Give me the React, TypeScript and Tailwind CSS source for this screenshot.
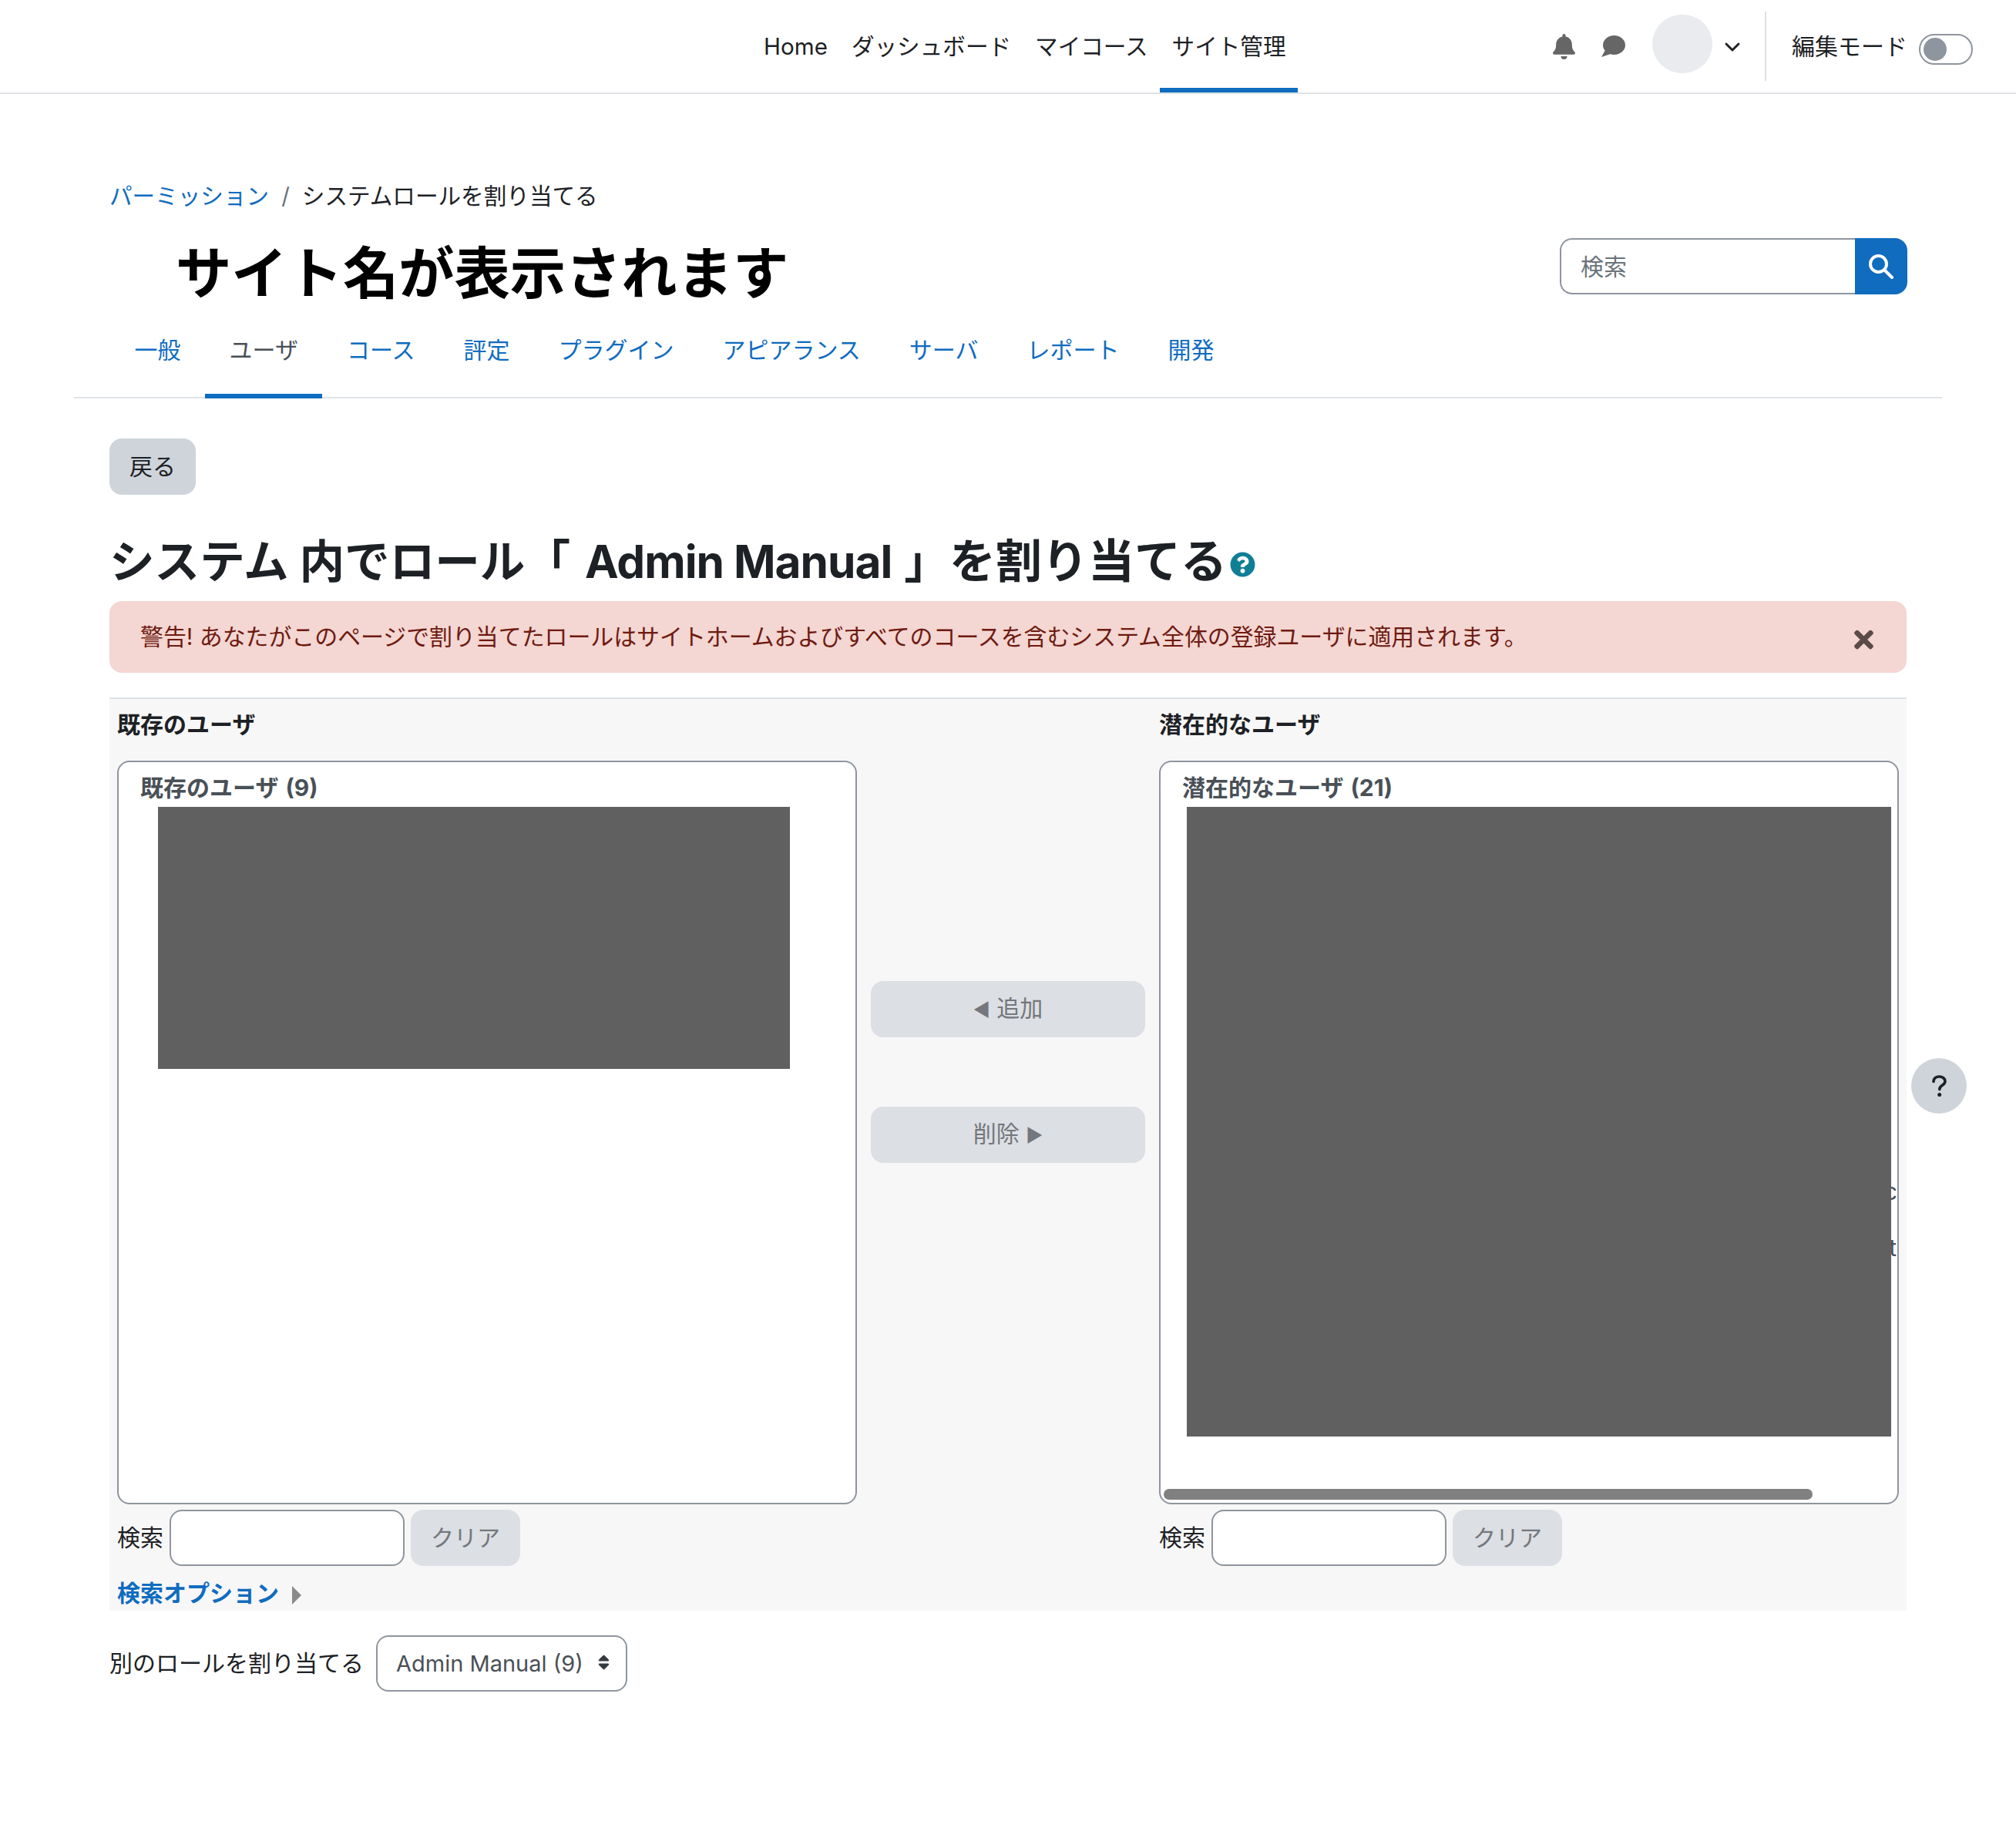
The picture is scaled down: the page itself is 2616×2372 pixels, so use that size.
import { ChevronDown } from "lucide-react";
import { FaBell, FaQuestionCircle, FaSort, FaTimes } from "react-icons/fa";

const navItems = ["Home", "ダッシュボード", "マイコース", "サイト管理"];
const tabs = ["一般", "ユーザ", "コース", "評定", "プラグイン", "アピアランス", "サーバ", "レポート", "開発"];

const SearchRow = () => (
    <div className="flex items-center mt-[7px]">
        <span className="mr-[8px]">検索</span>
        <input className="w-[305px] h-[73px] bg-white border-2 border-[#8f959e] rounded-2xl" />
        <button className="w-[142px] h-[73px] ml-[8px] rounded-2xl bg-[#dcdfe3] text-[#74777b]">クリア</button>
    </div>
);

const App: React.FC = () => {
    return (
        <div className="relative min-h-[2372px] bg-white text-[30px] leading-[45px] text-[#1d2125] font-['Inter','Noto_Sans_CJK_JP',sans-serif]">
            <header className="h-[122px] flex border-b-2 border-[#dee2e6] pl-[975.5px]">
                <nav className="flex text-[29.6px]">
                    {navItems.map((item) => (
                        <a key={item} className={`h-[120px] px-[15.5px] pt-[6px] flex items-center border-b-[6px] ${item === "サイト管理" ? "border-[#0f6cbf]" : "border-transparent"}`}>
                            {item}
                        </a>
                    ))}
                </nav>
                <div className="ml-auto flex items-center pr-[56px]">
                    <FaBell className="w-[29px] h-[33px] text-[#666666]" />
                    <svg viewBox="0 0 32 28" className="w-[32px] h-[28px] ml-[33px] text-[#666666]">
                        <ellipse cx="17.5" cy="12.5" rx="14.5" ry="12.5" fill="currentColor" />
                        <path d="M6 19 L1 28 L13 24 Z" fill="currentColor" />
                    </svg>
                    <div className="w-[78px] h-[76px] ml-[35px] mb-[6px] rounded-full bg-[#e9ebee]" />
                    <ChevronDown className="w-[32px] h-[32px] ml-[10px] mt-[1px]" strokeWidth={2.2} />
                    <div className="w-[2px] h-[90px] ml-[26px] bg-[#dee2e6]" />
                    <span className="ml-[33px]">編集モード</span>
                    <div className="w-[70px] h-[40px] ml-[15px] mt-[8px] rounded-full border-2 border-[#8f959e] flex items-center pl-[4px]">
                        <div className="w-[30px] h-[30px] rounded-full bg-[#8f959e]" />
                    </div>
                </div>
            </header>

            <div className="px-[96px]">
                <div className="mt-[110px] pl-[46px] flex items-center text-[29.6px]">
                    <a className="text-[#0f6cbf]">パーミッション</a>
                    <span className="mx-[16px] text-[#6a737b]">/</span>
                    <span>システムロールを割り当てる</span>
                </div>

                <div className="mt-[32px] h-[73px] flex items-start justify-between pr-[45px]">
                    <h1 className="pl-[132px] pt-[9px] text-[72.3px] leading-[73px] font-bold text-black">サイト名が表示されます</h1>
                    <div className="flex">
                        <input
                            placeholder="検索"
                            className="w-[383px] h-[73px] pl-[25px] border-2 border-r-0 border-[#8f959e] rounded-l-2xl placeholder:text-[#6a737b]"
                        />
                        <button className="w-[68px] h-[73px] bg-[#0f6cbf] rounded-r-2xl flex items-center justify-center">
                            <svg viewBox="0 0 32 32" className="w-[32px] h-[32px]" fill="none" stroke="white" strokeWidth="4" strokeLinecap="round">
                                <circle cx="12.5" cy="12.5" r="10.5" />
                                <line x1="20.5" y1="20.5" x2="30" y2="30" />
                            </svg>
                        </button>
                    </div>
                </div>

                <div className="mt-[24px] flex border-b-2 border-[#dee2e6] pl-[47px]">
                    {tabs.map((tab) => (
                        <a key={tab} className={`pt-[26px] pb-[34px] px-[31.5px] -mb-[2px] border-b-[6px] ${tab === "ユーザ" ? "border-[#0f6cbf] text-[#495057]" : "border-transparent text-[#0f6cbf]"}`}>
                            {tab}
                        </a>
                    ))}
                </div>

                <div className="px-[46px]">
                    <button className="block mt-[52px] w-[112px] h-[73px] rounded-2xl bg-[#ced4da]">戻る</button>

                    <h2 className="mt-[51px] pt-[3px] h-[67px] text-[58.6px] leading-[67px] font-bold flex items-center whitespace-pre">
                        システム 内でロール「 <span className="ml-[5px] mr-[2px] tracking-[-1px]">Admin Manual</span> 」<span className="text-[60px]">を割り当てる</span>
                        <FaQuestionCircle className="w-[33px] h-[33px] ml-[4px] mt-[8px] text-[#0f7f96]" />
                    </h2>

                    <div className="relative mt-[20px] h-[93px] rounded-2xl bg-[#f4d6d2] text-[#6e1a10] text-[29.9px] pl-[40px] flex items-center">
                        警告! あなたがこのページで割り当てたロールはサイトホームおよびすべてのコースを含むシステム全体の登録ユーザに適用されます。
                        <FaTimes className="absolute right-[43px] top-[32px] w-[25px] h-[36px] text-[#5a4a48]" />
                    </div>

                    <div className="mt-[32px] h-[1185px] border-t-2 border-[#dee2e6] bg-[#f7f7f7] px-[10px] pt-[11px] flex">
                        <div className="w-[960px]">
                            <div className="font-bold">既存のユーザ</div>
                            <div className="relative mt-[24px] h-[965px] bg-white border-2 border-[#8f959e] rounded-2xl overflow-hidden">
                                <div className="pl-[28px] pt-[11px] font-bold text-[#495057]">既存のユーザ <span className="ml-[2px]">(9)</span></div>
                                <div className="mt-[2px] ml-[51px] w-[820px] h-[340px] bg-[#606060]" />
                            </div>
                            <SearchRow />
                            <a className="block mt-[13px] font-bold text-[#0f6cbf] flex items-center">
                                検索オプション
                                <svg viewBox="0 0 12 24" className="w-[12px] h-[24px] ml-[17px] mt-[4px]">
                                    <path d="M0 0 L12 12 L0 24 Z" fill="#8a8a8a" />
                                </svg>
                            </a>
                        </div>

                        <div className="w-[356px] ml-[18px] pt-[355px] text-[#74777b]">
                            <button className="w-full h-[73px] rounded-2xl bg-[#dcdfe3]"><span className="text-[24px]">◀</span> 追加</button>
                            <button className="w-full h-[73px] mt-[90px] rounded-2xl bg-[#dcdfe3]">削除 <span className="text-[24px]">▶</span></button>
                        </div>

                        <div className="w-[960px] ml-[18px]">
                            <div className="font-bold">潜在的なユーザ</div>
                            <div className="relative mt-[24px] h-[965px] bg-white border-2 border-[#8f959e] rounded-2xl overflow-hidden">
                                <div className="pl-[28px] pt-[11px] font-bold text-[#495057]">潜在的なユーザ <span className="ml-[2px]">(21)</span></div>
                                <div className="relative z-10 mt-[2px] ml-[34px] w-[914px] h-[817px] bg-[#606060]" />
                                <span className="absolute right-0 top-[535px] text-[#495057]">c</span>
                                <span className="absolute right-[1px] top-[608px] text-[#495057]">t</span>
                                <div className="absolute left-[4px] bottom-[4px] w-[842px] h-[14px] rounded-[7px] bg-[#808080]" />
                            </div>
                            <SearchRow />
                        </div>
                    </div>

                    <div className="mt-[32px] flex items-center">
                        <span>別のロールを割り当てる</span>
                        <div className="relative ml-[16px]">
                            <select className="block w-[326px] h-[73px] pl-[24px] bg-white border-2 border-[#8f959e] rounded-2xl text-[29px] text-[#495057] appearance-none">
                                <option>Admin Manual (9)</option>
                            </select>
                            <FaSort className="absolute right-[23px] top-[23px] w-[15px] h-[24px] text-[#343a40]" />
                        </div>
                    </div>
                </div>
            </div>

            <button className="absolute left-[2480px] top-[1373px] w-[72px] h-[72px] rounded-full bg-[#ced4da] flex items-center justify-center">
                <svg viewBox="0 0 19 28" className="w-[19px] h-[28px]">
                    <path d="M2 8.5C2 4.5 5.2 2 9.5 2S17 4.6 17 8c0 3-2 4.3-4 5.6-1.8 1.2-3.2 2.2-3.2 5" fill="none" stroke="#1d2125" strokeWidth="3.6" strokeLinecap="round" />
                    <circle cx="9.7" cy="25.5" r="2.5" fill="#1d2125" />
                </svg>
            </button>
        </div>
    );
};

export default App;
